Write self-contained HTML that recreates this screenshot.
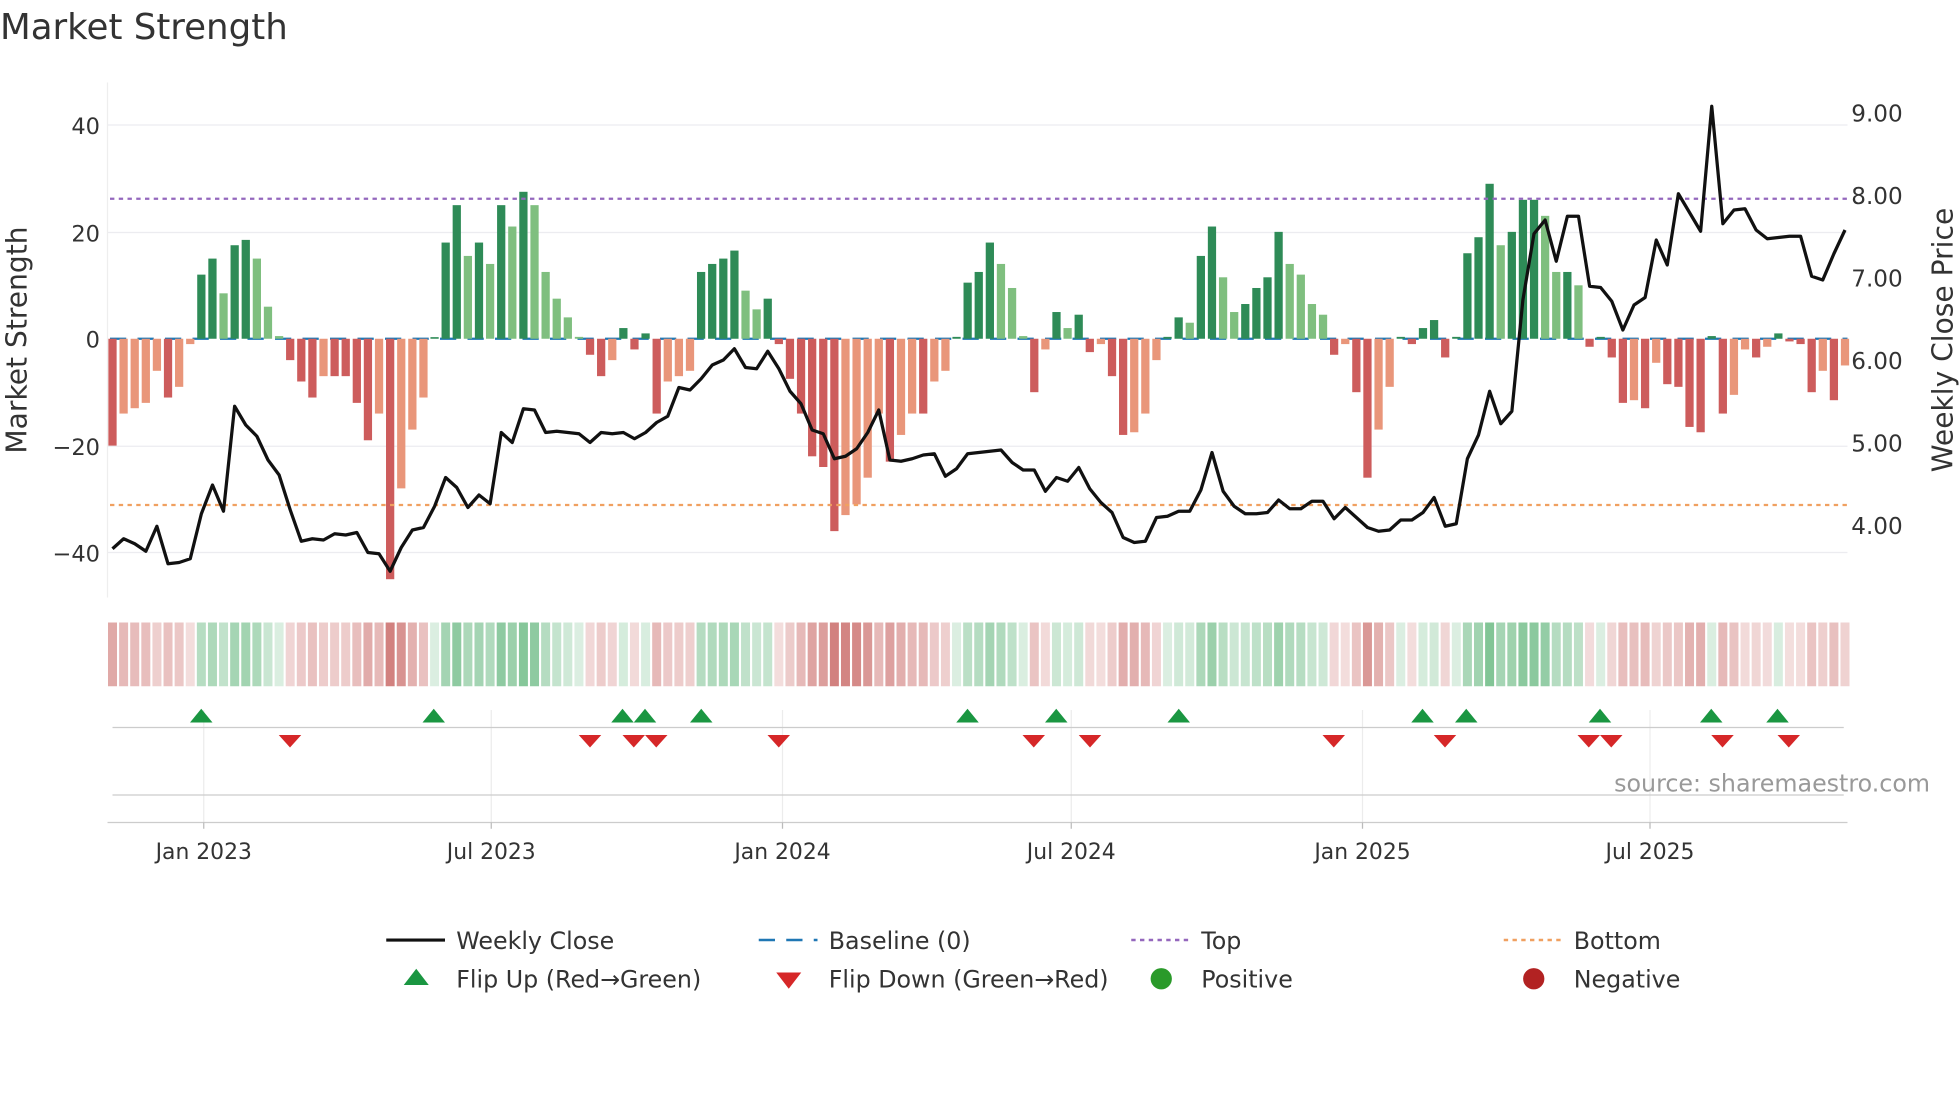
<!DOCTYPE html>
<html><head><meta charset="utf-8"><style>
html,body{margin:0;padding:0;background:#fff;width:1960px;height:1102px;overflow:hidden}
svg{display:block}
text{font-family:"DejaVu Sans","Liberation Sans",sans-serif;fill:#333}
</style></head><body>
<svg id="s" width="1960" height="1102" viewBox="0 0 1568 881.6" xmlns="http://www.w3.org/2000/svg">
<text x="0" y="31" font-size="28.5">Market Strength</text>
<g id="grid" stroke="#ececf0" stroke-width="1">
<line x1="86" x2="1478" y1="100" y2="100"/><line x1="86" x2="1478" y1="186" y2="186"/>
<line x1="86" x2="1478" y1="357" y2="357"/><line x1="86" x2="1478" y1="442" y2="442"/>
</g>
<line x1="86" x2="86" y1="66" y2="478" stroke="#eee"/>
<g font-size="18" text-anchor="end">
<text x="80" y="107">40</text><text x="80" y="193">20</text><text x="80" y="278">0</text>
<text x="80" y="364">−20</text><text x="80" y="449">−40</text></g>
<g font-size="18.5">
<text x="1481" y="97">9.00</text><text x="1481" y="163">8.00</text><text x="1481" y="229">7.00</text>
<text x="1481" y="295">6.00</text><text x="1481" y="361">5.00</text><text x="1481" y="427">4.00</text></g>
<text transform="translate(21,272) rotate(-90)" font-size="22.5" text-anchor="middle">Market Strength</text>
<text transform="translate(1562,272) rotate(-90)" font-size="22.5" text-anchor="middle">Weekly Close Price</text>
<line x1="88" x2="1478" y1="271" y2="271" stroke="#1f77b4" stroke-width="1.8" stroke-dasharray="13,9"/>
<g id="bars"></g>
<line x1="88" x2="1478" y1="159" y2="159" stroke="#9467bd" stroke-width="1.8" stroke-dasharray="3.5,3.5"/>
<line x1="88" x2="1478" y1="404" y2="404" stroke="#f0a060" stroke-width="1.8" stroke-dasharray="3.5,3.5"/>
<polyline id="price" fill="none" stroke="#111" stroke-width="2.6" stroke-linejoin="round"/>
<g id="heat"></g>
<g stroke="#ececec"><line x1="163" x2="163" y1="568" y2="658"/><line x1="393" x2="393" y1="568" y2="658"/><line x1="626" x2="626" y1="568" y2="658"/><line x1="857" x2="857" y1="568" y2="658"/><line x1="1090" x2="1090" y1="568" y2="658"/><line x1="1320" x2="1320" y1="568" y2="658"/></g>
<line x1="90" x2="1475" y1="582" y2="582" stroke="#ccc"/>
<line x1="90" x2="1475" y1="636" y2="636" stroke="#ccc"/>
<line x1="86" x2="1478" y1="658" y2="658" stroke="#ccc"/>
<g id="flips"></g>
<text x="1544" y="633" font-size="19" text-anchor="end" style="fill:#999">source: sharemaestro.com</text>
<g stroke="#bbb"><line x1="163" x2="163" y1="658" y2="663"/><line x1="393" x2="393" y1="658" y2="663"/><line x1="626" x2="626" y1="658" y2="663"/><line x1="857" x2="857" y1="658" y2="663"/><line x1="1090" x2="1090" y1="658" y2="663"/><line x1="1320" x2="1320" y1="658" y2="663"/></g>
<g font-size="17.5" text-anchor="middle">
<text x="163" y="687">Jan 2023</text><text x="393" y="687">Jul 2023</text><text x="626" y="687">Jan 2024</text>
<text x="857" y="687">Jul 2024</text><text x="1090" y="687">Jan 2025</text><text x="1320" y="687">Jul 2025</text></g>
<g font-size="19">
<line x1="309" x2="356" y1="752" y2="752" stroke="#111" stroke-width="2.5"/><text x="365" y="759">Weekly Close</text>
<line x1="607" x2="654" y1="752" y2="752" stroke="#1f77b4" stroke-width="2" stroke-dasharray="13,9"/><text x="663" y="759">Baseline (0)</text>
<line x1="905" x2="952" y1="752" y2="752" stroke="#9467bd" stroke-width="2" stroke-dasharray="3.5,3.5"/><text x="961" y="759">Top</text>
<line x1="1203" x2="1250" y1="752" y2="752" stroke="#f0a060" stroke-width="2" stroke-dasharray="3.5,3.5"/><text x="1259" y="759">Bottom</text>
<polygon points="323,788 343,788 333,775" fill="#1a9641"/><text x="365" y="790">Flip Up (Red→Green)</text>
<polygon points="621,778 641,778 631,791" fill="#d62728"/><text x="663" y="790">Flip Down (Green→Red)</text>
<circle cx="929" cy="783" r="8.5" fill="#2a9a2a"/><text x="961" y="790">Positive</text>
<circle cx="1227" cy="783" r="8.5" fill="#b22222"/><text x="1259" y="790">Negative</text>
</g>
</svg>
<script>
var v=[-20,-14,-13,-12,-6,-11,-9,-1,12,15,8.5,17.5,18.5,15,6,0.5,-4,-8,-11,-7,-7,-7,-12,-19,-14,-45,-28,-17,-11,0.3,18,25,15.5,18,14,25,21,27.5,25,12.5,7.5,4,0,-3,-7,-4,2,-2,1,-14,-8,-7,-6,12.5,14,15,16.5,9,5.5,7.5,-1,-7.5,-14,-22,-24,-36,-33,-31,-26,-14,-23,-18,-14,-14,-8,-6,0,10.5,12.5,18,14,9.5,0.5,-10,-2,5,2,4.5,-2.5,-1,-7,-18,-17.5,-14,-4,0,4,3,15.5,21,11.5,5,6.5,9.5,11.5,20,14,12,6.5,4.5,-3,-1,-10,-26,-17,-9,0,-1,2,3.5,-3.5,0,16,19,29,17.5,20,26,26,23,12.5,12.5,10,-1.5,0,-3.5,-12,-11.5,-13,-4.5,-8.5,-9,-16.5,-17.5,0.5,-14,-10.5,-2,-3.5,-1.5,1,-0.5,-1,-10,-6,-11.5,-5];
var p=[439,431,435,441,421,451,450,447,411,388,409,325,340,349,368,380,408,433,431,432,427,428,426,442,443,457,438,424,422,405,382,390,406,396,403,346,354,327,328,346,345,346,347,354,346,347,346,351,346,338,333,310,312,303,292,288,279,294,295,281,295,313,323,344,347,367,365,359,346,328,368,369,367,364,363,381,375,363,362,361,360,370,376,376,393,382,385,374,391,402,410,430,434,433,414,413,409,409,392,362,393,405,411,411,410,400,407,407,401,401,415,406,414,422,425,424,416,416,410,398,421,419,367,348,313,339,329,240,187,176,209,173,173,229,230,241,264,244,238,192,212,155,170,185,85,179,168,167,184,191,190,189,189,221,224,203,184];
var N='http://www.w3.org/2000/svg';function el(t,a,g){var e=document.createElementNS(N,t);for(var k in a)e.setAttribute(k,a[k]);document.getElementById(g).appendChild(e);}
var n=v.length,dx=(1476-90)/(n-1);
for(var i=0;i<n;i++){var x=90+i*dx,y0=271,h=v[i]*4.275,pr=i?v[i-1]:0,c;
if(v[i]>=0)c=v[i]>=pr?'#2e8b57':'#7fbf7f';else c=v[i]<=pr?'#cd5c5c':'#e9967a';
if(Math.abs(h)<1)h=h<0?-1.5:1.5;
el('rect',{x:x-3.3,y:h>0?y0-h:y0,width:6.6,height:Math.abs(h),fill:c},'bars');
var a=Math.min(1,0.25+0.7*Math.abs(v[i])/32);
el('rect',{x:x-3.6,y:498,width:7.2,height:51,fill:v[i]>=0?'#3aa35a':'#c0504d','fill-opacity':a*0.72},'heat');}
document.getElementById('price').setAttribute('points',p.map(function(y,i){return (90+i*dx).toFixed(1)+','+y}).join(' '));
[161,347,498,516,561,774,845,943,1138,1173,1280,1369,1422].forEach(function(x){el('polygon',{points:(x-9)+',578 '+(x+9)+',578 '+x+',567',fill:'#1a9641'},'flips');});
[232,472,507,525,623,827,872,1067,1156,1271,1289,1378,1431].forEach(function(x){el('polygon',{points:(x-9)+',588 '+(x+9)+',588 '+x+',598',fill:'#d62728'},'flips');});
</script>
</body></html>
